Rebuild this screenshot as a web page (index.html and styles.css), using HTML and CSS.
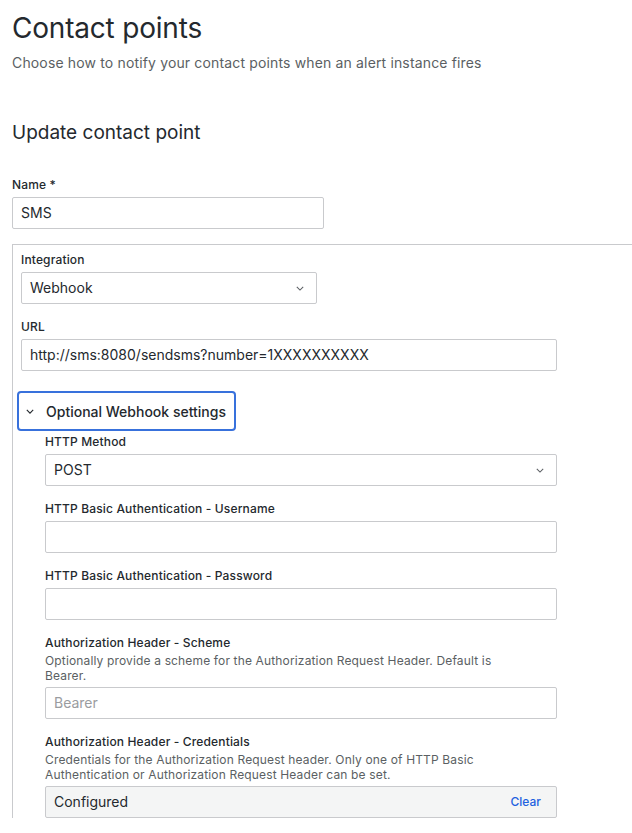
FILE: index.html
```html
<!DOCTYPE html>
<html>
<head>
<meta charset="utf-8">
<link rel="stylesheet" href="styles.css">
</head>
<body>
<div class="page">
  <h1 class="title">Contact points</h1>
  <p class="subtitle">Choose how to notify your contact points when an alert instance fires</p>
  <h2 class="section-title">Update contact point</h2>

  <div class="field">
    <label class="label">Name *</label>
    <div class="input input-name">SMS</div>
  </div>

  <div class="integration">
    <div class="field">
      <label class="label">Integration</label>
      <div class="input select select-integration"><span>Webhook</span><svg class="chev" viewBox="0 0 10 6" width="8" height="5"><path d="M1 1l4 4 4-4" fill="none" stroke="#5b5f63" stroke-width="1.3"/></svg></div>
    </div>
    <div class="field">
      <label class="label">URL</label>
      <div class="input input-wide">http://sms:8080/sendsms?number=1XXXXXXXXXX</div>
    </div>

    <button class="collapse-btn"><svg class="btn-chev" viewBox="0 0 10 6" width="8" height="5"><path d="M1 1l4 4 4-4" fill="none" stroke="#24292e" stroke-width="1.4"/></svg><span>Optional Webhook settings</span></button>

    <div class="nested">
      <div class="field">
        <label class="label">HTTP Method</label>
        <div class="input select"><span>POST</span><svg class="chev" viewBox="0 0 10 6" width="8" height="5"><path d="M1 1l4 4 4-4" fill="none" stroke="#5b5f63" stroke-width="1.3"/></svg></div>
      </div>
      <div class="field">
        <label class="label">HTTP Basic Authentication - Username</label>
        <div class="input"></div>
      </div>
      <div class="field">
        <label class="label">HTTP Basic Authentication - Password</label>
        <div class="input"></div>
      </div>
      <div class="field">
        <label class="label">Authorization Header - Scheme</label>
        <div class="desc">Optionally provide a scheme for the Authorization Request Header. Default is Bearer.</div>
        <div class="input placeholder">Bearer</div>
      </div>
      <div class="field">
        <label class="label">Authorization Header - Credentials</label>
        <div class="desc">Credentials for the Authorization Request header. Only one of HTTP Basic Authentication or Authorization Request Header can be set.</div>
        <div class="input configured"><span>Configured</span><span class="clear">Clear</span></div>
      </div>
    </div>
  </div>
</div>
</body>
</html>
```

FILE: styles.css
```css
html, body {
  margin: 0;
  padding: 0;
  overflow: hidden;
  background: #ffffff;
}

body {
  font-family: Inter, "Noto Sans", sans-serif;
  color: #24292e;
}

.page {
  padding: 11px 0 0 12px;
}

.title {
  margin: 0;
  font-size: 28px;
  font-weight: 400;
  line-height: 34px;
  letter-spacing: -0.2px;
}

.subtitle {
  margin: 8px 0 0;
  font-size: 14px;
  line-height: 20px;
  color: #5b5f63;
  letter-spacing: 0.15px;
}

.section-title {
  margin: 48px 0 0;
  font-size: 19px;
  font-weight: 400;
  line-height: 24px;
}

.field {
  display: flex;
  flex-direction: column;
  margin-top: 0;
  margin-bottom: 15px;
}

.page > .field {
  margin-top: 32px;
  margin-bottom: 15px;
}

.label {
  display: block;
  font-size: 12px;
  font-weight: 500;
  line-height: 16px;
  margin-bottom: 4px;
  letter-spacing: 0.15px;
}

.desc {
  font-size: 12px;
  line-height: 15px;
  color: #5b5f63;
  margin-top: -2px;
  margin-bottom: 4px;
  max-width: 470px;
  letter-spacing: 0.15px;
}

.input {
  box-sizing: border-box;
  height: 32px;
  border: 1px solid #c9cacd;
  border-radius: 2px;
  padding: 0 8px;
  font-size: 14px;
  line-height: 30px;
  display: flex;
  align-items: center;
  background: #ffffff;
  width: 512px;
}

.input-name {
  width: 312px;
}

.input-wide {
  width: 536px;
}

.select {
  justify-content: space-between;
  padding-right: 12px;
}

.select-integration {
  width: 296px;
}

.chev {
  display: block;
}

.integration {
  width: 640px;
  box-sizing: border-box;
  border-top: 1px solid #c9cacd;
  border-left: 1px solid #c9cacd;
  padding: 7px 0 0 8px;
}

.collapse-btn {
  display: flex;
  align-items: center;
  box-sizing: border-box;
  height: 40px;
  margin: 20px 0 3px -4px;
  padding: 0 8px 0 7px;
  border: 2px solid #3871dc;
  border-radius: 4px;
  background: #ffffff;
  font-family: Inter, "Noto Sans", sans-serif;
  font-size: 14px;
  font-weight: 500;
  color: #24292e;
  cursor: pointer;
}

.btn-chev {
  margin-right: 12px;
}

.nested {
  padding-left: 24px;
}

.placeholder {
  color: #9a9ca0;
}

.configured {
  background: #f4f5f5;
  justify-content: space-between;
  padding-right: 15px;
}

.clear {
  color: #1f62e0;
  font-size: 12px;
  font-weight: 500;
}
```
